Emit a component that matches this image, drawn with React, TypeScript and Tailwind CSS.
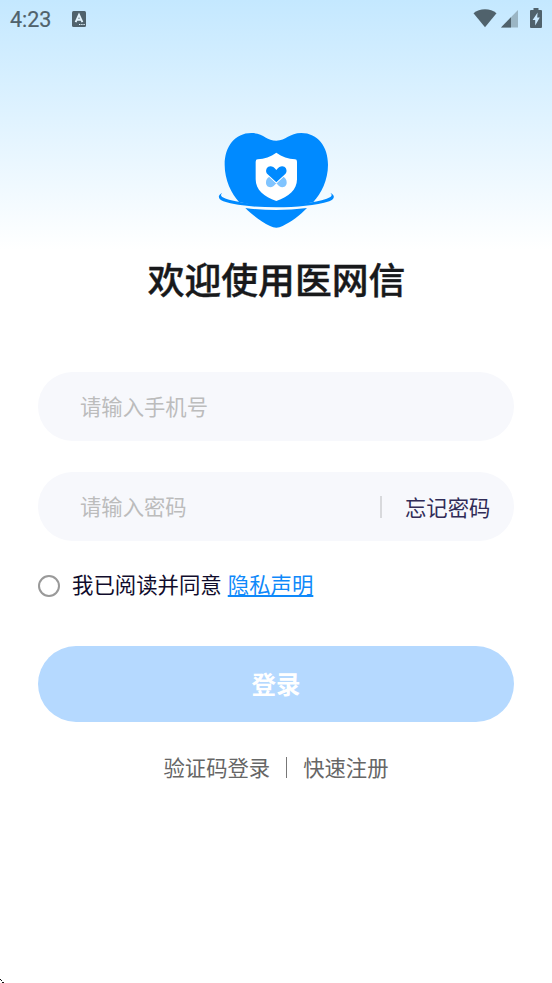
import { useState } from "react";

function StatusBar() {
  return (
    <div className="flex h-[38px] items-center justify-between pr-[10px] pl-[10px] text-[#50626c]">
      <div className="flex items-center">
        <span className="w-[62px] pt-[2px] font-['Roboto',sans-serif] text-[21.5px] leading-[36px] [-webkit-text-stroke:0.2px_#50626c]">
          4:23
        </span>
        <svg className="h-[16px] w-[14px]" viewBox="0 0 14 16">
          <rect width="14" height="16" rx="1.5" fill="currentColor" />
          <path d="M3.6 11.2 L7 3.8 L10.4 11.2 M5 8.8 H9" fill="none" stroke="#e4f4fd" strokeWidth="1.9" />
          <path d="M7 13.5h1.4M9.2 13.5h1.4M11.4 13.5h1.4" stroke="#e4f4fd" strokeWidth="1.2" />
        </svg>
      </div>
      <div className="mb-[2px] flex items-center">
        <svg className="h-[19px] w-[24px]" viewBox="0 0 24 19">
          <path d="M0.5 4.2 C6.5 -1 17.5 -1 23.5 4.2 L12 18.3 Z" fill="currentColor" />
        </svg>
        <svg className="ml-[4px] h-[19px] w-[17px]" viewBox="0 0 17 19">
          <path d="M0 18.5 L17 1 V18.5 Z" fill="#9ab5c4" />
          <path d="M0 18.5 L10 8.2 V18.5 Z" fill="currentColor" />
        </svg>
        <svg className="ml-[12px] h-[20px] w-[12px]" viewBox="0 0 12 20">
          <path d="M3.5 0 H8.5 V2 H11 Q12 2 12 3 V19 Q12 20 11 20 H1 Q0 20 0 19 V3 Q0 2 1 2 H3.5 Z" fill="currentColor" />
          <path d="M7.6 4.6 L2.6 12 H5.2 V17.4 L9.8 9.6 H7.2 Z" fill="#cbeaff" />
        </svg>
      </div>
    </div>
  );
}

function Logo() {
  return (
    <svg className="h-[120px] w-[140px]" viewBox="0 0 420 360">
      <path
        d="M211 62 C240 62 250 39 286 39 C335 39 366 80 366 134 C366 180 346 220 322 246 Q270 259 211 259 Q150 259 99 246 C76 220 56 180 56 134 C56 80 87 39 136 39 C172 39 182 62 211 62 Z"
        fill="#008aff"
      />
      {/* orbit ring around the heart */}
      <path
        d="M49 218 C35 225 34 236 52 244 C92 257 150 262 211 262 C272 262 330 257 370 244 C388 236 387 225 373 218 C381 226 377 231 362 236 C325 248 268 255 211 255 C154 255 97 248 60 236 C45 231 41 226 49 218 Z"
        fill="#008aff"
      />
      <path d="M118 264 Q211 276 303 264 C283 285 255 306 230 318 Q211 328 192 318 C167 306 139 285 118 264 Z" fill="#008aff" />
      <path
        d="M211 98 C228 111 247 117 267 118 Q273 118 273 125 V178 C273 210 248 230 211 243 C174 230 149 210 149 178 V125 Q149 118 155 118 C175 117 194 111 211 98 Z"
        fill="#fff"
      />
      <g fill="#80c4ff">
        <path d="M190 170 L211 190 L203 198 C191 207 179 199 180 187 C180 179 184 173 190 170 Z" />
        <path d="M232 170 L211 190 L219 198 C231 207 243 199 242 187 C242 179 238 173 232 170 Z" />
      </g>
      <path
        d="M211 150 C220 138 228 137 235 140 C243 145 244 157 237 163 L211 187 L185 163 C178 157 179 145 187 140 C194 137 202 138 211 150 Z"
        fill="#008aff"
        stroke="#fff"
        strokeWidth="5"
        paintOrder="stroke"
      />
    </svg>
  );
}

export default function App() {
  const [phone, setPhone] = useState("");
  const [password, setPassword] = useState("");
  const [agreed, setAgreed] = useState(false);

  return (
    <main className="relative h-[983px] w-[552px] overflow-hidden bg-white bg-[linear-gradient(to_bottom,#c4e8ff_0px,#ffffff_250px)] font-['Noto_Sans_CJK_SC',sans-serif]">
      <StatusBar />
      <div className="mt-[82px] flex justify-center">
        <Logo />
      </div>
      <h1 className="mt-[9px] pl-px text-center text-[36.8px] leading-[58px] font-medium text-[#18191b] [-webkit-text-stroke:0.4px_#18191b]">
        欢迎使用医网信
      </h1>

      <form className="mt-[65px] px-[38px]" onSubmit={(e) => e.preventDefault()}>
        <div className="flex h-[69px] items-center rounded-full bg-[#f7f8fc] pl-[42px]">
          <input
            value={phone}
            onChange={(e) => setPhone(e.target.value)}
            placeholder="请输入手机号"
            className="w-[300px] pb-[1px] text-[21.33px] outline-none placeholder:text-[#bcbcbc]"
          />
        </div>
        <div className="mt-[31px] flex h-[69px] items-center rounded-full bg-[#f7f8fc] pl-[42px]">
          <input
            type="password"
            value={password}
            onChange={(e) => setPassword(e.target.value)}
            placeholder="请输入密码"
            className="w-[300px] pb-[1px] text-[21.33px] outline-none placeholder:text-[#bcbcbc]"
          />
          <span className="h-[22px] w-[2px] bg-[#d8d9dc]" />
          <button type="button" className="ml-[23px] text-[21.33px] text-[#312c57]">
            忘记密码
          </button>
        </div>

        <div className="mt-[28px] flex h-[32px] items-center text-[21.4px] text-[#100c2c]">
          <button
            type="button"
            onClick={() => setAgreed(!agreed)}
            className={`mt-px mr-[12px] h-[22px] w-[22px] rounded-full border-2 ${agreed ? "border-[#008aff] bg-[#008aff]" : "border-[#999999]"}`}
          />
          <span className="pb-[2px]">我已阅读并同意</span>
          <a className="ml-[6px] pb-[2px] text-[#0f89fa] underline">隐私声明</a>
        </div>

        <button
          type="submit"
          className="mt-[45px] h-[76px] w-full rounded-full bg-[#b5d9ff] text-[24.5px] font-bold text-white"
        >
          登录
        </button>
      </form>

      <div className="mt-[29px] flex h-[32px] items-center justify-center text-[21.33px] text-[#666666]">
        <span>验证码登录</span>
        <span className="mx-[16px] h-[21px] w-px bg-[#777777]" />
        <span>快速注册</span>
      </div>

      <svg className="absolute bottom-0 left-0 h-[5px] w-[5px]" viewBox="0 0 5 5" shapeRendering="crispEdges">
        <path d="M0 1h1v1h-1zM1 2h1v1h-1zM2 4h1v1h-1zM3 4h1v1h-1z" fill="#111" />
      </svg>
    </main>
  );
}
